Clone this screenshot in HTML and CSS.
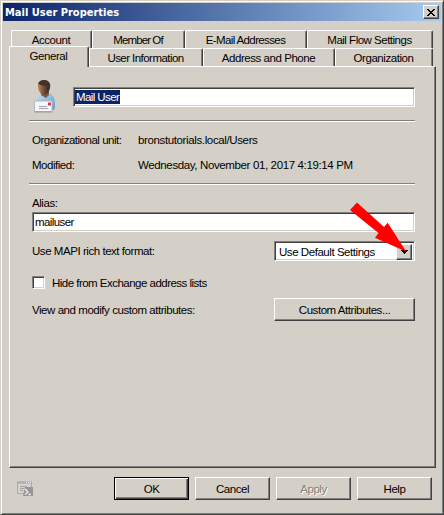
FILE: index.html
```html
<!DOCTYPE html>
<html lang="en">
<head>
<meta charset="utf-8">
<title>Mail User Properties</title>
<link rel="stylesheet" href="styles.css">
</head>
<body>
<main class="window">
  <header class="titlebar">
    <h1>Mail User Properties</h1>
    <button class="close" aria-label="Close"><svg width="8" height="7" viewBox="0 0 8 7" shape-rendering="crispEdges"><path d="M0 0h2v1h1v1h2V1h1V0h2v1H7v1H6v1H5v1h1v1h1v1h1v1H6V6H5V5H3v1H2v1H0V6h1V5h1V4h1V3H2V2H1V1H0z"/></svg></button>
  </header>
  <nav class="tabs">
    <div class="tabrow back">
      <span class="tab t-account">Account</span><span class="tab t-member">Member Of</span><span class="tab t-email">E-Mail Addresses</span><span class="tab t-flow">Mail Flow Settings</span>
    </div>
    <div class="tabrow front">
      <span class="tab t-general">General</span><span class="tab t-info">User Information</span><span class="tab t-address">Address and Phone</span><span class="tab t-org">Organization</span>
    </div>
  </nav>
  <section class="panel">
    <div class="identity">
      <svg class="person" width="23" height="34" viewBox="0 0 23 34">
        <defs>
          <linearGradient id="skin" x2="1" y2="0"><stop stop-color="#c08a58"/><stop offset=".5" stop-color="#704c31"/><stop offset="1" stop-color="#392820"/></linearGradient>
          <linearGradient id="shirt" x2="1" y2="1"><stop stop-color="#c4e3f5"/><stop offset="1" stop-color="#5b9ac5"/></linearGradient>
        </defs>
        <path d="M2 24c0-6 2-9 6-10l7-1c5 2 6 5 6 14l-1 3H2z" fill="url(#shirt)"/>
        <path d="M7 11h8v4l-3 3-5-3z" fill="#80583b"/>
        <path d="M4 6c0-4 3-6 6-6 4 0 6 3 6 6 0 5-3 9-6 9s-6-4-6-9z" fill="url(#skin)"/>
        <path d="M4 4c1-3 3-4 6-4 5 0 7 4 6 8l-2 4-2-6c-3 0-5-1-8-2z" fill="#40342b"/>
        <path d="M.5 21h17.500v10.500H.5z" fill="#f6f7fa" stroke="#b4b8c2"/>
        <path d="M.5 32h18" stroke="#8f959e"/>
        <path d="M14 22.500h3v3h-3z" fill="#d83c42"/>
        <path d="M5 26.500h8M5 28.500h9" stroke="#a5a4b0"/>
      </svg>
      <div class="field name-field"><span class="selected">Mail User</span></div>
    </div>
    <hr>
    <dl class="details">
      <dt>Organizational unit:</dt><dd class="unit">bronstutorials.local/Users</dd>
      <dt class="mod">Modified:</dt><dd class="date">Wednesday, November 01, 2017 4:19:14 PM</dd>
    </dl>
    <hr>
    <div class="label alias">Alias:</div>
    <div class="field alias-field"><span>mailuser</span></div>
    <div class="format-row">
      <span class="mapi">Use MAPI rich text format:</span>
      <div class="select"><span>Use Default Settings</span><i class="drop"><svg width="7" height="4" viewBox="0 0 7 4" shape-rendering="crispEdges"><path d="M0 0h7v1H6v1H5v1H4v1H3V3H2V2H1V1H0z"/></svg></i></div>
    </div>
    <div class="check-row"><i class="checkbox"></i><span class="hide-text">Hide from Exchange address lists</span></div>
    <div class="custom-row"><span class="view-text">View and modify custom attributes:</span><button class="button custom">Custom Attributes...</button></div>
  </section>
  <footer class="actions">
    <svg class="script-icon" width="17" height="17" viewBox="0 0 17 17">
      <path d="M.5 1.500h14v11H.5z" fill="#d2d2ce" stroke="#aaa"/>
      <path d="M0 1.500h15" stroke="#a9a9a9" stroke-width="2"/>
      <path d="M9 1.500h1M11 1.500h1M13 1.500h1" stroke="#eee"/>
      <path d="M3 5.500h7M3 7.500h4M3 9.500h3" stroke="#a4a4a4"/>
      <path d="M8 6h8v9H6z" fill="#969696"/>
      <path d="M8 8l3 3-3 2.500M11.500 13.500H14" fill="none" stroke="#eee" stroke-width="1.300"/>
    </svg>
    <button class="button ok">OK</button><button class="button">Cancel</button><button class="button disabled">Apply</button><button class="button">Help</button>
  </footer>
  <svg class="pointer" width="60" height="54" viewBox="0 0 60 54"><path d="M8 2.500L35 27 38.700 22.700 57.300 51.700 26 37.700 29.500 33 1 10z" fill="#f00"/></svg>
</main>
</body>
</html>
```
FILE: styles.css
```css
* { box-sizing: border-box; }
body { margin: 0; width: 444px; height: 515px; overflow: hidden; background: #d4d0c8; color: #000; font: 11.5px/14px "Liberation Sans", Arial, sans-serif; letter-spacing: -.45px; }
.window { position: relative; width: 444px; height: 515px; padding: 2px 1px 0 2px; background: #d4d0c8; border: 1px solid #d4d0c8; border-right-color: #404040; border-bottom-color: #404040; box-shadow: inset 1px 1px #fff, inset -1px -1px #808080; }
.titlebar { display: flex; align-items: center; justify-content: space-between; width: 438px; height: 18px; padding: 0 2px; background: linear-gradient(90deg, #0a246a, #a6caf0); }
h1 { margin: 0; padding-top: 1px; color: #fff; font: bold 11px/18px "DejaVu Sans Condensed", "DejaVu Sans", sans-serif; letter-spacing: 0; }
button { margin: 0; color: #000; font: inherit; letter-spacing: inherit; }
.close { display: flex; align-items: center; justify-content: center; width: 16px; height: 14px; padding: 0; background: #d4d0c8; border: 1px solid; border-color: #fff #404040 #404040 #fff; box-shadow: inset -1px -1px #808080; }
.tabs { height: 45px; padding: 9px 0 0 6px; }
.tabrow { display: flex; height: 18px; }
.back { padding-left: 2px; }
.tab { display: flex; justify-content: center; height: 18px; padding: 2px 1px 0 0; border: 1px solid #fff; border-bottom: 0; border-right-color: #404040; border-radius: 2px 2px 0 0; box-shadow: inset -1px 0 #808080; white-space: pre; background: #d4d0c8; }
.t-account { width: 81px; }
.t-member { width: 93px; letter-spacing: -.9px; }
.t-email { width: 122px; letter-spacing: -.62px; }
.t-flow { width: 126px; letter-spacing: -.5px; }
.t-general { position: relative; z-index: 1; width: 80px; height: 21px; margin-top: -2px; }
.t-info { width: 114px; letter-spacing: -.55px; }
.t-address { width: 132px; }
.t-org { width: 98px; }
.panel { width: 427px; height: 402px; margin-left: 6px; padding: 13px 18px 0 19px; border: 1px solid; border-color: #fff #404040 #404040 #fff; box-shadow: inset -1px -1px #808080; }
.identity { display: flex; height: 40px; padding-left: 5px; }
.field { height: 20px; padding: 2px 1px 0 2px; background: #fff; border: 1px solid; border-color: #808080 #fff #fff #808080; box-shadow: inset 1px 1px #404040, inset -1px -1px #d4d0c8; }
.name-field { width: 342px; margin: 7px 0 0 16px; padding-left: 1px; }
.selected { display: inline-block; height: 14px; padding: 0 1px; color: #fff; background: #0a246a; letter-spacing: -.6px; }
hr { width: 386px; height: 2px; margin: 0; border: 0; border-top: 1px solid #808080; border-bottom: 1px solid #fff; }
.details { display: grid; grid-template-columns: 106px 1fr; row-gap: 11px; height: 61px; margin: 0; padding: 11px 0 0 3px; white-space: nowrap; align-content: start; }
.details dt { letter-spacing: -.48px; }
.details dd { margin: 0; letter-spacing: -.37px; }
.label { margin: 11px 0 2px 3px; }
.alias-field { width: 383px; margin-left: 3px; }
.alias-field span { letter-spacing: -.6px; }
.format-row { display: flex; justify-content: space-between; width: 383px; height: 20px; margin: 9px 0 0 3px; }
.mapi { padding-top: 3px; }
.select { display: flex; justify-content: space-between; width: 141px; height: 20px; padding: 2px; background: #fff; border: 1px solid; border-color: #808080 #fff #fff #808080; box-shadow: inset 1px 1px #404040, inset -1px -1px #d4d0c8; }
.select span { padding: 1px 0 0 2px; }
.drop { display: flex; align-items: center; justify-content: center; width: 16px; height: 16px; background: #d4d0c8; border: 1px solid; border-color: #fff #404040 #404040 #fff; box-shadow: inset -1px -1px #808080; }
.check-row { display: flex; margin: 15px 0 0 3px; }
.hide-text { letter-spacing: -.52px; }
.checkbox { width: 13px; height: 13px; margin-right: 7px; background: #fff; border: 1px solid; border-color: #808080 #fff #fff #808080; box-shadow: inset 1px 1px #404040, inset -1px -1px #d4d0c8; }
.custom-row { display: flex; justify-content: space-between; width: 383px; margin: 8px 0 0 3px; }
.view-text { padding-top: 5px; }
.button { width: 75px; height: 23px; padding: 0; text-align: center; background: #d4d0c8; border: 1px solid; border-color: #fff #404040 #404040 #fff; border-radius: 0; box-shadow: inset -1px -1px #808080; }
.button.custom { width: 141px; }
.actions { display: flex; width: 429px; gap: 6px; margin: 9px 0 0 6px; }
.script-icon { margin: 4px 74px 0 8px; }
.button.ok { border-color: #000; box-shadow: inset 1px 1px #fff, inset -1px -1px #404040, inset -2px -2px #808080; }
.button.disabled { color: #808080; text-shadow: 1px 1px #fff; }
.pointer { position: absolute; left: 348px; top: 199px; }
```
